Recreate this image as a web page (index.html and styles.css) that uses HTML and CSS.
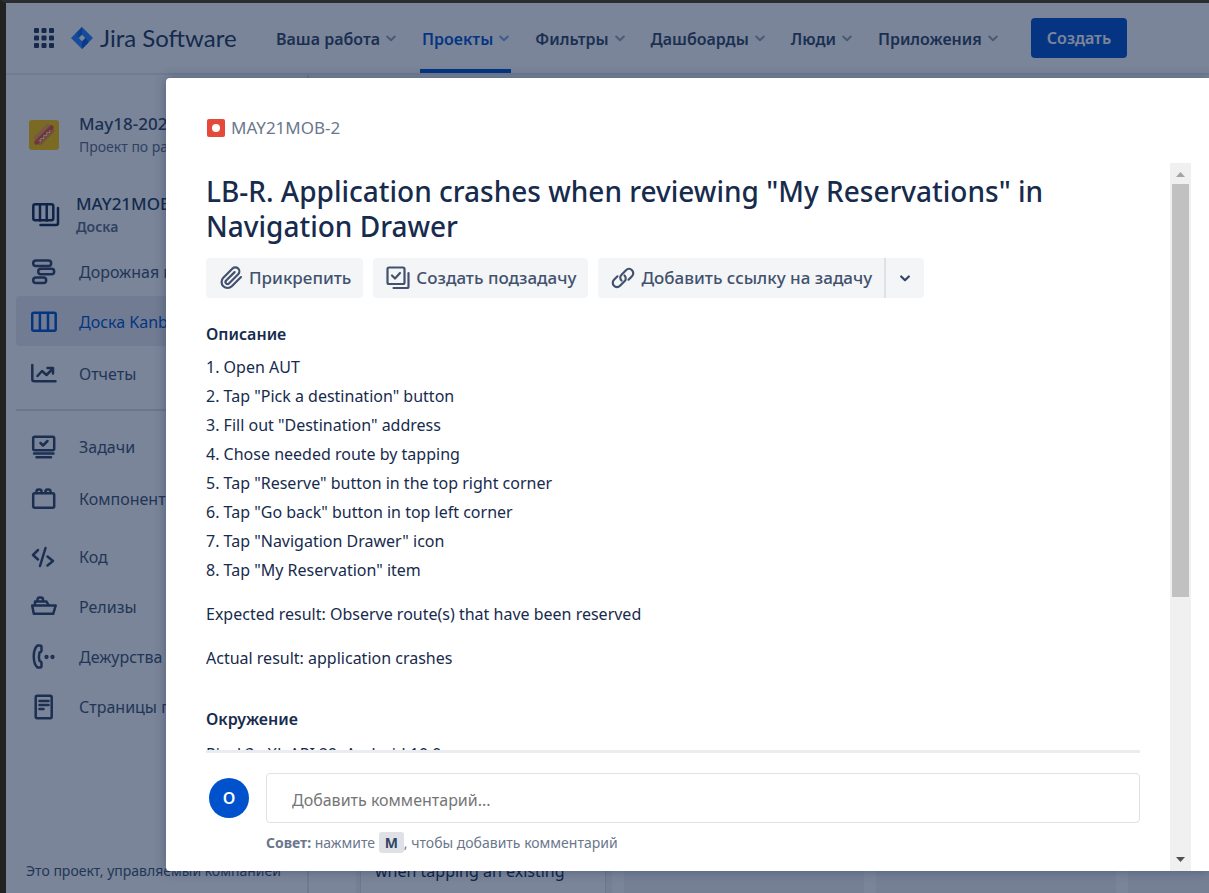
FILE: index.html
```html
<!DOCTYPE html>
<html lang="ru">
<head>
<meta charset="utf-8">
<title>MAY21MOB-2 - Jira Software</title>
<meta name="viewport" content="width=device-width, initial-scale=1">
<link rel="stylesheet" href="styles.css">
</head>
<body>
<div class="app">
  <header class="topbar">
    <button class="switcher" aria-label="Приложения Atlassian">
      <svg width="20" height="20" viewBox="0 0 20 20" fill="currentColor"><rect width="5" height="5" rx="1"/><rect x="7.5" width="5" height="5" rx="1"/><rect x="15" width="5" height="5" rx="1"/><rect y="7.5" width="5" height="5" rx="1"/><rect x="7.5" y="7.5" width="5" height="5" rx="1"/><rect x="15" y="7.5" width="5" height="5" rx="1"/><rect y="15" width="5" height="5" rx="1"/><rect x="7.5" y="15" width="5" height="5" rx="1"/><rect x="15" y="15" width="5" height="5" rx="1"/></svg>
    </button>
    <a class="logo" href="#">
      <svg width="22" height="22" viewBox="0 0 22 22"><defs><linearGradient id="lg" x1="0" y1="0" x2="1" y2="0"><stop offset="0" stop-color="#2684ff"/><stop offset="1" stop-color="#0a5ad8"/></linearGradient></defs><path d="M11 0 22 11 11 22 0 11Z" fill="#2684ff"/><path d="M11 0 11 7.5 7.5 11 4.5 7.5Q4.300 6.500 5 6Z" fill="url(#lg)"/><path d="M11 22 11 14.500 14.500 11 17.500 14.500 17 16Z" fill="#0a5ad8"/><path d="M11 7.800 14.200 11 11 14.200 7.800 11Z" fill="#fff"/></svg>
      <span>Jira Software</span>
    </a>
    <nav class="menu">
      <button>Ваша работа<svg class="chev" viewBox="0 0 10 7"><path d="M1.200 1.500 5 5.200 8.800 1.500"/></svg></button>
      <button class="active">Проекты<svg class="chev" viewBox="0 0 10 7"><path d="M1.200 1.500 5 5.200 8.800 1.500"/></svg></button>
      <button>Фильтры<svg class="chev" viewBox="0 0 10 7"><path d="M1.200 1.500 5 5.200 8.800 1.500"/></svg></button>
      <button>Дашбоарды<svg class="chev" viewBox="0 0 10 7"><path d="M1.200 1.500 5 5.200 8.800 1.500"/></svg></button>
      <button>Люди<svg class="chev" viewBox="0 0 10 7"><path d="M1.200 1.500 5 5.200 8.800 1.500"/></svg></button>
      <button>Приложения<svg class="chev" viewBox="0 0 10 7"><path d="M1.200 1.500 5 5.200 8.800 1.500"/></svg></button>
    </nav>
    <button class="create">Создать</button>
  </header>

  <div class="page">
    <aside class="sidebar">
      <div class="project">
        <svg width="30" height="30" viewBox="0 0 30 30"><rect width="30" height="30" rx="3" fill="#ffc400"/><path d="M8 18 19 7" stroke="#ff9a4d" stroke-width="6" stroke-linecap="round"/><path d="M11 22 22 11" stroke="#f28a3c" stroke-width="6" stroke-linecap="round"/><path d="M7.500 22.500 22.500 7.500" stroke="#e5532d" stroke-width="4.500" stroke-linecap="round"/><path d="M9.500 20.500l2 .5.500-2.500 2.500 0 .5-3 2.500 0 .5-3 2.500 0 .500-2.500" fill="none" stroke="#ffe0b0" stroke-width="1.200"/></svg>
        <div><strong>May18-2021</strong><span>Проект по разработке</span></div>
      </div>
      <div class="board-head">
        <svg width="28" height="24" viewBox="0 0 28 24"><rect x="1.300" y="1.300" width="20" height="16" rx="2"/><path d="M8 1.500v16M14.700 1.500v16M26 5v15a2 2 0 0 1-2 2H8.500"/></svg>
        <div><strong>MAY21MOB board</strong><span>Доска</span></div>
      </div>
      <ul class="links">
        <li><a href="#"><svg viewBox="0 0 26 26"><rect x="2.200" y="1.500" width="18" height="5.500" rx="2.750"/><rect x="7.200" y="9.800" width="16" height="5.500" rx="2.750"/><rect x="2.200" y="18.500" width="13" height="5.500" rx="2.750"/></svg>Дорожная карта</a></li>
        <li><a class="current" href="#"><svg viewBox="0 0 26 26"><rect x="1.200" y="3.700" width="23.500" height="18" rx="1.500"/><path d="M8.900 4v17.500M17 4v17.500"/></svg>Доска Kanban</a></li>
        <li class="spaced"><a href="#"><svg viewBox="0 0 26 26"><path d="M1.300 4v14.300a2 2 0 0 0 2 2H24.500M6.500 15l4.500-5 4.500 4L22 7.500M16.500 7h5.500v5.500"/></svg>Отчеты</a></li>
      </ul>
      <ul class="links second">
        <li><a href="#"><svg viewBox="0 0 26 26"><rect x="2.200" y="2.700" width="21" height="13.500" rx="1.500"/><path d="M9.500 9l2.500 2.500L16.500 7M3 19.500h19.500M5.500 23.300h14.500"/></svg>Задачи</a></li>
        <li class="spaced"><a href="#"><svg viewBox="0 0 26 26"><rect x="2.200" y="7.200" width="21" height="14.500" rx="1.500"/><path d="M5.500 7V5.500a2 2 0 0 1 2-2h1a2 2 0 0 1 2 2V7M14.500 7V5.500a2 2 0 0 1 2-2h1a2 2 0 0 1 2 2V7"/></svg>Компоненты</a></li>
      </ul>
      <ul class="links">
        <li><a href="#"><svg viewBox="0 0 26 26"><path d="M7 6 2 11l5 4.500M16.500 12.500l5.500 4.500-5.500 4.500M14.500 4l-5.500 18"/></svg>Код</a></li>
        <li><a href="#"><svg viewBox="0 0 26 26"><path d="M1.200 11.500h23.500l-2.500 8.300H2.800ZM4 11V7.500h11.500l2 3.500M6.500 7V5a2 2 0 0 1 2-1.500h1.500a2 2 0 0 1 2 2V7"/></svg>Релизы</a></li>
        <li><a href="#"><svg viewBox="0 0 26 26"><path d="M6.500 1.500h2.500q1.500 0 1.500 1.500v3.500q0 1.500-2 2c-.6 2.300-.6 6.200 0 8.500q2 .5 2 2V22q0 1.500-1.500 1.500H6.500C1.500 19 1.500 6 6.500 1.500Z"/><circle cx="15.500" cy="13" r=".9"/><circle cx="21.500" cy="13" r=".9"/></svg>Дежурства</a></li>
        <li><a href="#"><svg viewBox="0 0 26 26"><rect x="4.700" y="1.700" width="16" height="22.500" rx="1.500"/><path d="M8.500 7h9M8.500 11h9M8.500 15h4"/></svg>Страницы проекта</a></li>
      </ul>
      <p class="managed">Это проект, управляемый компанией</p>
    </aside>
    <main class="board">
      <section class="column first"><article class="ticket">when tapping an existing</article></section>
      <section class="column"></section>
      <section class="column"></section>
      <section class="column"></section>
    </main>
  </div>

  <div class="blanket"></div>

  <div class="dialog" role="dialog" aria-labelledby="issue-title">
    <a class="issue-key" href="#"><svg width="18" height="18" viewBox="0 0 18 18"><rect width="18" height="18" rx="2" fill="#e5493a"/><circle cx="9" cy="9" r="4" fill="#fff"/></svg>MAY21MOB-2</a>
    <div class="dialog-body">
      <div class="issue">
        <div class="details">
          <h1 id="issue-title">LB-R. Application crashes when reviewing "My Reservations" in Navigation Drawer</h1>
          <div class="actions">
            <button><svg width="24" height="24" viewBox="0 0 24 24"><path d="M22 11.050l-9.190 9.190a6 6 0 0 1-8.490-8.490l9.190-9.190a4 4 0 0 1 5.660 5.660l-9.200 9.190a2 2 0 0 1-2.830-2.830l8.490-8.480"/></svg>Прикрепить</button>
            <button><svg width="24" height="24" viewBox="0 0 24 24"><rect x="1.500" y="1.500" width="17" height="16.500" rx="1.500"/><path d="M6 9.500l3 3 5-5.500M22.500 7v13.500a1.500 1.500 0 0 1-1.500 1.500H7.500"/></svg>Создать подзадачу</button>
            <div class="split">
              <button><svg width="24" height="24" viewBox="0 0 24 24"><path d="M10.500 14.500a4 4 0 0 1 0-5.800l4.500-4.500a4.200 4.200 0 0 1 6 6l-3.500 3.500M13.500 9.500a4 4 0 0 1 0 5.800L9 19.800a4.200 4.200 0 0 1-6-6l3.500-3.500"/></svg>Добавить ссылку на задачу</button>
              <button class="more" aria-label="Другие способы"><svg class="chev" viewBox="0 0 10 7"><path d="M1.200 1.500 5 5.200 8.800 1.500"/></svg></button>
            </div>
          </div>
          <h2>Описание</h2>
          <ol>
            <li>Open AUT</li>
            <li>Tap "Pick a destination" button</li>
            <li>Fill out "Destination" address</li>
            <li>Chose needed route by tapping</li>
            <li>Tap "Reserve" button in the top right corner</li>
            <li>Tap "Go back" button in top left corner</li>
            <li>Tap "Navigation Drawer" icon</li>
            <li>Tap "My Reservation" item</li>
          </ol>
          <p>Expected result: Observe route(s) that have been reserved</p>
          <p>Actual result: application crashes</p>
          <h2 class="environment">Окружение</h2>
          <p class="device">Pixel 3a XL API 29, Android 10.0</p>
        </div>
        <footer class="comment">
          <span class="avatar">O</span>
          <div class="comment-field">
            <input type="text" placeholder="Добавить комментарий..." aria-label="Добавить комментарий">
            <p class="tip"><strong>Совет:</strong> нажмите <kbd>M</kbd>, чтобы добавить комментарий</p>
          </div>
        </footer>
      </div>
      <div class="scrollbar" aria-hidden="true">
        <svg class="arrow" viewBox="0 0 9 5"><path d="M0 5 4.500 0 9 5Z" fill="#a3a3a3"/></svg>
        <div class="track"><div class="thumb"></div></div>
        <svg class="arrow" viewBox="0 0 9 5"><path d="M0 0 4.500 5 9 0Z" fill="#505050"/></svg>
      </div>
    </div>
  </div>
</div>
</body>
</html>
```
FILE: styles.css
```css
* { box-sizing: border-box; }
body {
  margin: 0;
  font-family: "Noto Sans", "Open Sans", sans-serif;
  font-size: 16px;
  line-height: 24px;
  color: #172b4d;
}
button, input { font: inherit; color: inherit; }
button { border: 0; background: none; padding: 0; }
a { color: inherit; text-decoration: none; }
h1, h2, p, ul, ol { margin: 0; padding: 0; }
ul, ol { list-style: none; }
svg { flex: none; }

.app {
  position: relative;
  display: flex;
  flex-direction: column;
  height: 100vh;
  overflow: hidden;
  border-left: 6px solid #222;
  border-top: 3px solid #2d2d2d;
  background: #fff;
}

/* Top navigation */
.topbar {
  display: flex;
  flex: none;
  align-items: center;
  height: 72px;
  padding-left: 28px;
  border-bottom: 2px solid #ebecf0;
  color: #253858;
}
.switcher { display: flex; margin-right: 17px; }
.logo {
  display: flex;
  align-items: center;
  gap: 7px;
  width: 203px;
  font-family: Lato, sans-serif;
  font-size: 24px;
  line-height: 32px;
  white-space: nowrap;
}
.menu { display: flex; align-self: stretch; gap: 22px; }
.menu button {
  display: flex;
  align-items: center;
  gap: 6px;
  padding: 5px 2px 0;
  border-bottom: 4px solid transparent;
  font-weight: 600;
  color: #344563;
  white-space: nowrap;
}
.menu .active { color: #0052cc; border-color: #0052cc; }
.chev { width: 10px; height: 7px; fill: none; stroke: currentColor; stroke-width: 2; stroke-linecap: round; stroke-linejoin: round; }
.menu .chev { opacity: .5; }
.create {
  height: 40px;
  margin-left: 31px;
  padding: 0 16px;
  border-radius: 4px;
  background: #0052cc;
  color: #fff;
  font-weight: 600;
}

/* Project sidebar */
.page { display: flex; flex: 1; min-height: 0; }
.sidebar {
  display: flex;
  flex-direction: column;
  flex: none;
  width: 303px;
  padding: 37px 10px 12px;
  border-right: 2px solid #e6e8ec;
  color: #42526e;
  white-space: nowrap;
}
.project, .board-head { display: flex; align-items: center; padding-left: 13px; }
.project { gap: 20px; }
.project strong, .project span, .board-head strong, .board-head span { display: block; }
.project strong { font-size: 17px; font-weight: 500; line-height: 24px; color: #344563; }
.project span, .board-head span { font-size: 14px; line-height: 22px; color: #5e6c84; }
.board-head { gap: 16px; margin: 34px 0 8px; padding-left: 16px; }
.board-head svg { fill: none; stroke: #172b4d; stroke-width: 2.500; stroke-linecap: round; }
.board-head strong { font-size: 17px; font-weight: 500; line-height: 24px; color: #253858; }
.board-head span { font-weight: 600; }
.links a { display: flex; align-items: center; gap: 22px; height: 50px; padding: 2px 0 0 15px; border-radius: 4px; }
.links .spaced { margin-top: 2px; }
.links svg { width: 26px; height: 26px; fill: none; stroke: #344563; stroke-width: 2.500; stroke-linecap: round; stroke-linejoin: round; }
.links .current { background: #ebecf0; color: #0052cc; }
.links .current svg { stroke: #0052cc; }
.second { margin: 11px 0 8px; padding-top: 10px; border-top: 2px solid #dfe1e6; }
.managed { margin-top: auto; padding-left: 10px; font-size: 14px; line-height: 20px; }

/* Board columns */
.board { display: flex; flex: 1; gap: 12px; min-width: 0; padding: 20px 0 0 47px; }
.column { display: flex; flex: none; flex-direction: column; justify-content: flex-end; width: 240px; background: #f4f5f7; }
.first { width: 256px; padding: 0 7px 0 5px; }
.ticket { padding: 12px 14px 10px; background: #fff; box-shadow: 0 1px 2px rgba(9, 30, 66, .25); }

/* Issue dialog */
.blanket { position: absolute; inset: 0; background: rgba(9, 30, 66, .54); }
.dialog {
  position: absolute;
  top: 75px;
  right: 0;
  bottom: 22px;
  left: 160px;
  display: flex;
  flex-direction: column;
  padding: 38px 18px 0 40px;
  border-radius: 4px 0 0 4px;
  background: #fff;
  box-shadow: 0 0 12px rgba(9, 30, 66, .35);
}
.issue-key { display: flex; align-items: center; gap: 6px; height: 24px; margin-bottom: 23px; padding-left: 1px; font-size: 17px; color: #6b778c; }
.dialog-body { display: flex; flex: 1; gap: 30px; min-height: 0; }
.issue { display: flex; flex: 1; flex-direction: column; min-width: 0; }
.details { flex: 1; min-height: 0; padding-top: 11px; overflow: hidden; }
h1 { font-size: 28px; font-weight: 500; line-height: 35px; }
.actions { display: flex; gap: 10px; margin: 14px 0 24px; }
.actions button {
  display: flex;
  align-items: center;
  gap: 6px;
  height: 40px;
  padding: 0 12px 0 13px;
  border-radius: 4px;
  background: #f4f5f7;
  color: #42526e;
  font-size: 17px;
  font-weight: 500;
  white-space: nowrap;
}
.actions svg { fill: none; stroke: currentColor; stroke-width: 2.200; stroke-linecap: round; stroke-linejoin: round; }
.split { display: flex; border-radius: 4px; background: #f4f5f7; }
.actions .more { padding: 0 14px; border-left: 2px solid #dfe1e6; border-radius: 0 4px 4px 0; color: #344563; }
h2 { font-size: 16px; font-weight: 600; line-height: 24px; }
ol { margin-top: 7px; counter-reset: step; }
ol li { line-height: 29px; counter-increment: step; }
ol li::before { content: counter(step) ". "; }
.details p { margin-top: 15px; line-height: 29px; }
.details .environment { margin-top: 34px; }
.details .device { margin-top: 9px; }
.comment { display: flex; flex: none; gap: 17px; height: 121px; padding: 20px 0 0 3px; border-top: 3px solid #ebecf0; }
.avatar {
  display: flex;
  flex: none;
  align-items: center;
  justify-content: center;
  width: 40px;
  height: 40px;
  margin-top: 5px;
  border-radius: 50%;
  background: #0052cc;
  color: #fff;
  font-weight: 600;
}
.comment-field { flex: 1; min-width: 0; }
.comment-field input { width: 100%; height: 50px; padding: 4px 25px 0; border: 1px solid #dfe1e6; border-radius: 4px; outline: 0; }
.comment-field input::placeholder { color: #757575; opacity: 1; }
.tip { margin-top: 9px; font-size: 14px; line-height: 22px; color: #6b778c; }
kbd { padding: 1px 6px; border-radius: 3px; background: #dfe1e6; color: #344563; font-family: inherit; font-weight: 700; }
.scrollbar { display: flex; flex: none; flex-direction: column; align-items: center; width: 21px; padding: 9px 0; background: #f0f0f0; }
.arrow { width: 9px; height: 5px; }
.track { flex: 1; width: 17px; margin: 7px 0; }
.thumb { height: 62%; background: #c1c1c1; }
```
